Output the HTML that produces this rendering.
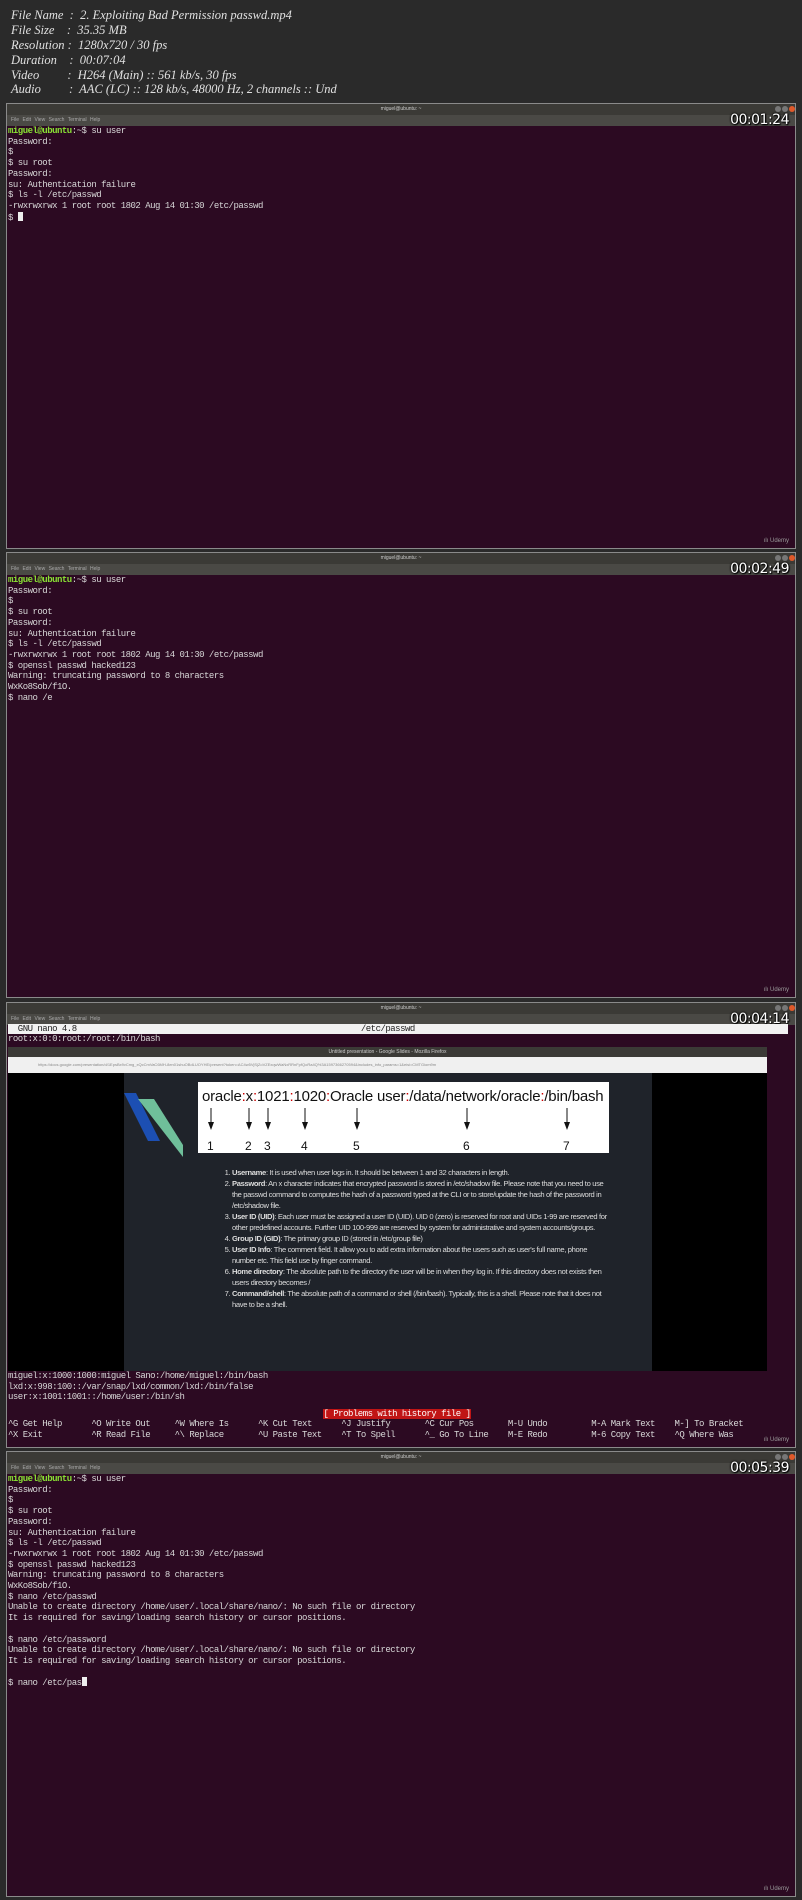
<!DOCTYPE html>
<html><head><meta charset="utf-8"><style>
*{margin:0;padding:0;box-sizing:border-box}
body{width:802px;height:1900px;background:#2a2a2a;position:relative;overflow:hidden;font-family:"Liberation Sans",sans-serif}
.hd{position:absolute;left:11px;font:italic 12.5px "Liberation Serif",serif;color:#e0e0e0;white-space:pre}
.fr{position:absolute;left:6px;width:790px;height:446px;background:#2c0a22;border:1px solid #8a8a8a}
.tb{position:absolute;left:0;top:0;width:100%;height:11px;background:#3b3a36;color:#ccc;font-size:5px;text-align:center;line-height:11px}
.mb{position:absolute;left:0;top:11px;width:100%;height:11px;background:#4a4945;color:#aaa;font-size:5px;line-height:11px;padding-left:4px;word-spacing:2px}
.btn{position:absolute;top:2px;width:6px;height:6px;border-radius:50%;background:#777}
.ts{position:absolute;right:6px;top:8px;color:#fff;font:14px "DejaVu Sans",sans-serif;text-shadow:0 0 2px #000,0 0 2px #000,1px 1px 1px #000;letter-spacing:-0.5px}
.tx{position:absolute;left:1px;top:22px;font:9px/10.7px "Liberation Mono",monospace;letter-spacing:-0.5px;color:#d8d8d8;white-space:pre}
.g{color:#8ae234;font-weight:bold}
.cur{display:inline-block;width:5px;height:9px;background:#eee;vertical-align:-1px}
.ud{position:absolute;right:6px;bottom:4px;color:#999;font-size:6px}
.sl li{margin-bottom:0}
</style></head><body>
<div class="hd" style="top:8px">File Name  :  2. Exploiting Bad Permission passwd.mp4</div>
<div class="hd" style="top:23px">File Size    :  35.35 MB</div>
<div class="hd" style="top:38px">Resolution :  1280x720 / 30 fps</div>
<div class="hd" style="top:53px">Duration    :  00:07:04</div>
<div class="hd" style="top:68px">Video         :  H264 (Main) :: 561 kb/s, 30 fps</div>
<div class="hd" style="top:82px">Audio         :  AAC (LC) :: 128 kb/s, 48000 Hz, 2 channels :: Und</div>

<!-- frame 1 -->
<div class="fr" style="top:103px">
<div class="tb">miguel@ubuntu: ~</div><div class="btn" style="right:14px"></div><div class="btn" style="right:7px"></div><div class="btn" style="right:0;background:#e0592a"></div>
<div class="mb">File Edit View Search Terminal Help</div>
<div class="ts">00:01:24</div>
<div class="tx"><span class="g">miguel@ubuntu</span>:~$ su user
Password:
$
$ su root
Password:
su: Authentication failure
$ ls -l /etc/passwd
-rwxrwxrwx 1 root root 1802 Aug 14 01:30 /etc/passwd
$ <span class="cur"></span></div>
<div class="ud">ılı Udemy</div>
</div>

<!-- frame 2 -->
<div class="fr" style="top:552px">
<div class="tb">miguel@ubuntu: ~</div><div class="btn" style="right:14px"></div><div class="btn" style="right:7px"></div><div class="btn" style="right:0;background:#e0592a"></div>
<div class="mb">File Edit View Search Terminal Help</div>
<div class="ts">00:02:49</div>
<div class="tx"><span class="g">miguel@ubuntu</span>:~$ su user
Password:
$
$ su root
Password:
su: Authentication failure
$ ls -l /etc/passwd
-rwxrwxrwx 1 root root 1802 Aug 14 01:30 /etc/passwd
$ openssl passwd hacked123
Warning: truncating password to 8 characters
WxKo8Sob/f1O.
$ nano /e</div>
<div class="ud">ılı Udemy</div>
</div>

<!-- frame 3 -->
<div class="fr" style="top:1002px">
<div class="tb">miguel@ubuntu: ~</div><div class="btn" style="right:14px"></div><div class="btn" style="right:7px"></div><div class="btn" style="right:0;background:#e0592a"></div>
<div class="mb">File Edit View Search Terminal Help</div>
<div class="ts">00:04:14</div>
<div style="position:absolute;left:1px;top:21px;width:780px;height:10px;background:#f2f2f2;font:9px/10px 'Liberation Mono',monospace;letter-spacing:-0.5px;color:#222;white-space:pre">  GNU nano 4.8                                                          /etc/passwd</div>
<div class="tx" style="top:31px">root:x:0:0:root:/root:/bin/bash</div>
<div style="position:absolute;left:1px;top:44px;width:759px;height:324px;background:#000">
 <div style="height:10px;background:#3b3a36;color:#ccc;font-size:5px;text-align:center;line-height:10px">Untitled presentation - Google Slides - Mozilla Firefox</div>
 <div style="height:16px;background:#f0f0f0;color:#888;font-size:4px;line-height:16px;padding-left:30px;overflow:hidden;white-space:nowrap">https://docs.google.com/presentation/d/1EpsBx9vCmg_xQcCmVaC6MH-8en01shuOBdLUOYHE/present?token=AC4w5VjSjZoVZExqwWaNxRRnFpfQoRa4Q%3A1597366270594&amp;includes_info_params=1&amp;eisi=CMTGiom9m</div>
 <div style="position:absolute;left:116px;top:26px;width:528px;height:298px;background:#1f232a">
  <svg style="position:absolute;left:0;top:0" width="64" height="85"><polygon points="0,20 12,20 36,68 24,68" fill="#1c4fb3"/><polygon points="14,26 30,26 59,72 59,84" fill="#6fbf9a"/></svg>
  <div style="position:absolute;left:74px;top:9px;width:411px;height:71px;background:#fff;color:#111">
   <div style="position:absolute;left:4px;top:6px;font:15px 'Liberation Sans',sans-serif;letter-spacing:-0.2px">oracle<span style="color:#c00">:</span>x<span style="color:#c00">:</span>1021<span style="color:#c00">:</span>1020<span style="color:#c00">:</span>Oracle user<span style="color:#c00">:</span>/data/network/oracle<span style="color:#c00">:</span>/bin/bash</div>
   <svg style="position:absolute;left:0;top:26px" width="411" height="45" font-family="Liberation Sans" font-size="12" fill="#111">
    <g stroke="#111" stroke-width="1"><line x1="13" y1="0" x2="13" y2="14"/><line x1="51" y1="0" x2="51" y2="14"/><line x1="70" y1="0" x2="70" y2="14"/><line x1="107" y1="0" x2="107" y2="14"/><line x1="159" y1="0" x2="159" y2="14"/><line x1="269" y1="0" x2="269" y2="14"/><line x1="369" y1="0" x2="369" y2="14"/></g>
    <g><polygon points="10,14 16,14 13,22"/><polygon points="48,14 54,14 51,22"/><polygon points="67,14 73,14 70,22"/><polygon points="104,14 110,14 107,22"/><polygon points="156,14 162,14 159,22"/><polygon points="266,14 272,14 269,22"/><polygon points="366,14 372,14 369,22"/></g>
    <text x="9" y="42">1</text><text x="47" y="42">2</text><text x="66" y="42">3</text><text x="103" y="42">4</text><text x="155" y="42">5</text><text x="265" y="42">6</text><text x="365" y="42">7</text>
   </svg>
  </div>
  <ol class="sl" style="position:absolute;left:88px;top:94px;width:398px;color:#ddd;font:7.6px/11px 'Liberation Sans',sans-serif;letter-spacing:-0.35px;padding-left:20px">
   <li><b>Username</b>: It is used when user logs in. It should be between 1 and 32 characters in length.</li>
   <li><b>Password</b>: An x character indicates that encrypted password is stored in /etc/shadow file. Please note that you need to use the passwd command to computes the hash of a password typed at the CLI or to store/update the hash of the password in /etc/shadow file.</li>
   <li><b>User ID (UID)</b>: Each user must be assigned a user ID (UID). UID 0 (zero) is reserved for root and UIDs 1-99 are reserved for other predefined accounts. Further UID 100-999 are reserved by system for administrative and system accounts/groups.</li>
   <li><b>Group ID (GID)</b>: The primary group ID (stored in /etc/group file)</li>
   <li><b>User ID Info</b>: The comment field. It allow you to add extra information about the users such as user's full name, phone number etc. This field use by finger command.</li>
   <li><b>Home directory</b>: The absolute path to the directory the user will be in when they log in. If this directory does not exists then users directory becomes /</li>
   <li><b>Command/shell</b>: The absolute path of a command or shell (/bin/bash). Typically, this is a shell. Please note that it does not have to be a shell.</li>
  </ol>
 </div>
</div>
<div class="tx" style="top:368px">miguel:x:1000:1000:miguel Sano:/home/miguel:/bin/bash
lxd:x:998:100::/var/snap/lxd/common/lxd:/bin/false
user:x:1001:1001::/home/user:/bin/sh</div>
<div style="position:absolute;left:316px;top:406px;width:148px;height:10px;background:#c01515;color:#fff;font:9px/10px 'Liberation Mono',monospace;letter-spacing:-0.5px;white-space:pre;text-align:center">[ Problems with history file ]</div>
<div class="tx" style="top:416px">^G Get Help      ^O Write Out     ^W Where Is      ^K Cut Text      ^J Justify       ^C Cur Pos       M-U Undo         M-A Mark Text    M-] To Bracket
^X Exit          ^R Read File     ^\ Replace       ^U Paste Text    ^T To Spell      ^_ Go To Line    M-E Redo         M-6 Copy Text    ^Q Where Was</div>
<div class="ud">ılı Udemy</div>
</div>

<!-- frame 4 -->
<div class="fr" style="top:1451px">
<div class="tb">miguel@ubuntu: ~</div><div class="btn" style="right:14px"></div><div class="btn" style="right:7px"></div><div class="btn" style="right:0;background:#e0592a"></div>
<div class="mb">File Edit View Search Terminal Help</div>
<div class="ts">00:05:39</div>
<div class="tx"><span class="g">miguel@ubuntu</span>:~$ su user
Password:
$
$ su root
Password:
su: Authentication failure
$ ls -l /etc/passwd
-rwxrwxrwx 1 root root 1802 Aug 14 01:30 /etc/passwd
$ openssl passwd hacked123
Warning: truncating password to 8 characters
WxKo8Sob/f1O.
$ nano /etc/passwd
Unable to create directory /home/user/.local/share/nano/: No such file or directory
It is required for saving/loading search history or cursor positions.

$ nano /etc/password
Unable to create directory /home/user/.local/share/nano/: No such file or directory
It is required for saving/loading search history or cursor positions.

$ nano /etc/pas<span class="cur"></span></div>
<div class="ud">ılı Udemy</div>
</div>
</body></html>
